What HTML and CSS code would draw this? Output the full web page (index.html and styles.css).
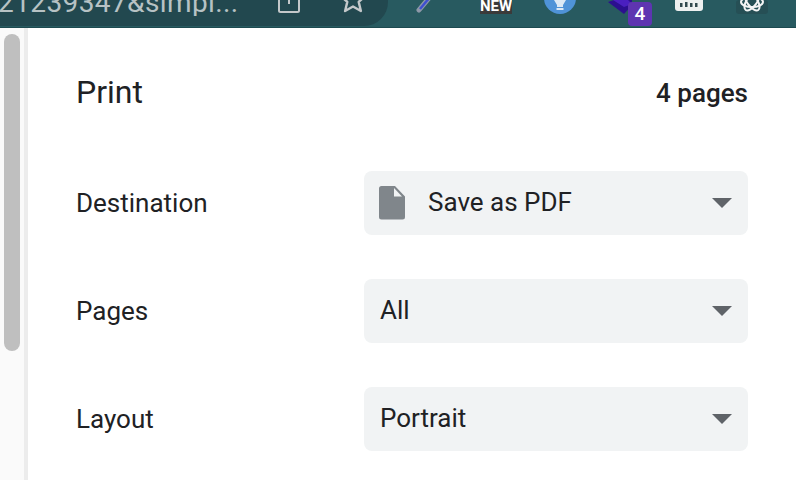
FILE: index.html
```html
<!DOCTYPE html>
<html lang="en">
<head>
<meta charset="utf-8">
<title>Print</title>
<link rel="stylesheet" href="styles.css">
</head>
<body>
<header class="toolbar">
  <div class="omnibox">
    <span class="url">21239347&amp;simpl...</span>
    <svg class="omni-icon share" width="22" height="14" viewBox="0 0 22 14"><path d="M1 0v10.500a1.500 1.500 0 0 0 1.500 1.500h17a1.500 1.500 0 0 0 1.500-1.500V0M11 0v4" fill="none" stroke="#c4c8ca" stroke-width="2"/></svg>
    <svg class="omni-icon star" width="28" height="14" viewBox="-14 0 28 14"><path d="M-12.400 -4 L-5.700 1.850 L-7.900 11 L0 6.500 L7.900 11 L5.700 1.850 L12.400 -4" fill="none" stroke="#c4c8ca" stroke-width="2.400" stroke-linejoin="round"/></svg>
  </div>
  <div class="extensions">
    <svg class="ext pen" width="20" height="13" viewBox="0 0 20 13"><path d="M3 10 L13 -2" stroke="#8d98a8" stroke-width="5" stroke-linecap="round"/><path d="M4 9 L14 -3" stroke="#3f4fd0" stroke-width="2.500"/></svg>
    <span class="ext new"><span class="new-text">NEW</span></span>
    <svg class="ext bulb" width="32" height="14" viewBox="0 0 32 14"><circle cx="16" cy="-2" r="16" fill="#4f93d8"/><path d="M10 0h12l-3 5v2h-6v-2z" fill="#dce9f5"/><rect x="12.500" y="8" width="7" height="2" fill="#dce9f5"/></svg>
    <div class="ext badge-wrap">
      <svg class="cube" width="24" height="14" viewBox="0 0 24 14"><path d="M0 2 L6 0 L24 0 L24 5 L16 14Z" fill="#2c0f8f"/><path d="M5 0 L20 0 L24 4 L16 7Z" fill="#4a1fc0"/></svg>
      <span class="badge">4</span>
    </div>
    <svg class="ext ruler" width="30" height="12" viewBox="0 0 30 12"><path d="M1 0h28v8a3 3 0 0 1-3 3H4a3 3 0 0 1-3-3z" fill="#eef0f0"/><g fill="#33494e"><rect x="6" y="3" width="2.500" height="4"/><rect x="11" y="2" width="2.500" height="5"/><rect x="16" y="3" width="2.500" height="4"/><rect x="21" y="3" width="2.500" height="4"/></g></svg>
    <svg class="ext atom" width="32" height="14" viewBox="0 0 32 14"><rect width="32" height="14" rx="3" fill="#264f55"/><g fill="none" stroke="#f4f5f5" stroke-width="2"><ellipse cx="16" cy="2" rx="11" ry="5"/><ellipse cx="16" cy="1" rx="5" ry="11" transform="rotate(35 16 1)"/><ellipse cx="16" cy="1" rx="5" ry="11" transform="rotate(-35 16 1)"/></g></svg>
  </div>
</header>
<div class="content">
  <aside class="scroll-track"><div class="scroll-thumb"></div></aside>
  <main class="sidebar">
    <div class="title-row">
      <h1 class="title">Print</h1>
      <span class="count">4 pages</span>
    </div>
    <div class="setting">
      <span class="label">Destination</span>
      <div class="select">
        <svg class="file-icon" width="28" height="34" viewBox="0 0 28 34"><path d="M3.500 0H17l10 10.500V31a2.500 2.500 0 0 1-2.500 2.500h-21A2.500 2.500 0 0 1 1 31V2.500A2.500 2.500 0 0 1 3.500 0Z" fill="#80868b"/><path d="M16 2v8.500h8z" fill="#f1f3f4"/></svg>
        <span class="value">Save as PDF</span>
        <span class="arrow"></span>
      </div>
    </div>
    <div class="setting">
      <span class="label">Pages</span>
      <div class="select">
        <span class="value">All</span>
        <span class="arrow"></span>
      </div>
    </div>
    <div class="setting">
      <span class="label">Layout</span>
      <div class="select">
        <span class="value">Portrait</span>
        <span class="arrow"></span>
      </div>
    </div>
  </main>
</div>
</body>
</html>
```

FILE: styles.css
```css
* { box-sizing: border-box; }
html, body { margin: 0; height: 100%; overflow: hidden; background: #fff; }
body { font-family: Roboto, "Liberation Sans", sans-serif; color: #202124; display: flex; flex-direction: column; }

.toolbar { height: 28px; flex: none; display: flex; background: #285a60; border-bottom: 1px solid #1d4a50; }
.omnibox { width: 388px; height: 26px; background: #22484f; border-bottom-right-radius: 24px; display: flex; align-items: flex-start; overflow: hidden; }
.url { font: 28px/26px Roboto, sans-serif; letter-spacing: .4px; color: #b7c2c4; flex: none; width: 278px; white-space: nowrap; overflow: hidden; height: 26px; margin-top: -10px; margin-left: -2px; }
.omni-icon { flex: none; }
.share { margin-left: 2px; margin-right: 39px; }
.extensions { flex: 1; display: flex; align-items: flex-start; }
.ext { flex: none; }
.pen { margin-left: 28px; }
.new { margin-left: 44px; width: 32px; height: 14px; background: #3a3a3a; overflow: hidden; display: flex; justify-content: center; }
.new-text { color: #fff; font: 700 15px/13px Roboto, sans-serif; }
.bulb { margin-left: 32px; }
.badge-wrap { margin-left: 32px; width: 44px; height: 27px; position: relative; }
.cube { display: block; }
.badge { position: absolute; left: 20px; top: 2px; width: 24px; height: 24px; border-radius: 4px; background: #5e35b1; color: #fff; font: 500 19px/24px Roboto, sans-serif; text-align: center; }
.ruler { margin-left: 22px; }
.atom { margin-left: 32px; }

.content { flex: 1; display: flex; min-height: 0; }
.scroll-track { width: 28px; flex: none; background: #fafafa; border-right: 4px solid #ececec; padding: 6px 0 0 4px; }
.scroll-thumb { width: 16px; height: 317px; background: #bfbfbf; border-radius: 8px; }

.sidebar { flex: 1; padding: 0 48px; }
.title-row { display: flex; justify-content: space-between; align-items: center; height: 36px; margin-top: 46px; margin-bottom: 61px; }
.title { margin: 0; font-size: 32px; font-weight: 400; line-height: 36px; }
.count { font-size: 26px; font-weight: 500; margin-top: 2px; }
.setting { display: flex; align-items: center; justify-content: space-between; height: 64px; margin-bottom: 44px; }
.label { font-size: 26px; }
.select { width: 384px; height: 64px; background: #f1f3f4; border-radius: 8px; display: flex; align-items: center; padding: 0 16px; font-size: 26px; }
.file-icon { margin-right: 22px; flex: none; margin-left: -2px; }
.value { flex: 1; margin-top: -2px; }
.arrow { width: 0; height: 0; border-left: 10px solid transparent; border-right: 10px solid transparent; border-top: 10px solid #5f6368; }
```
